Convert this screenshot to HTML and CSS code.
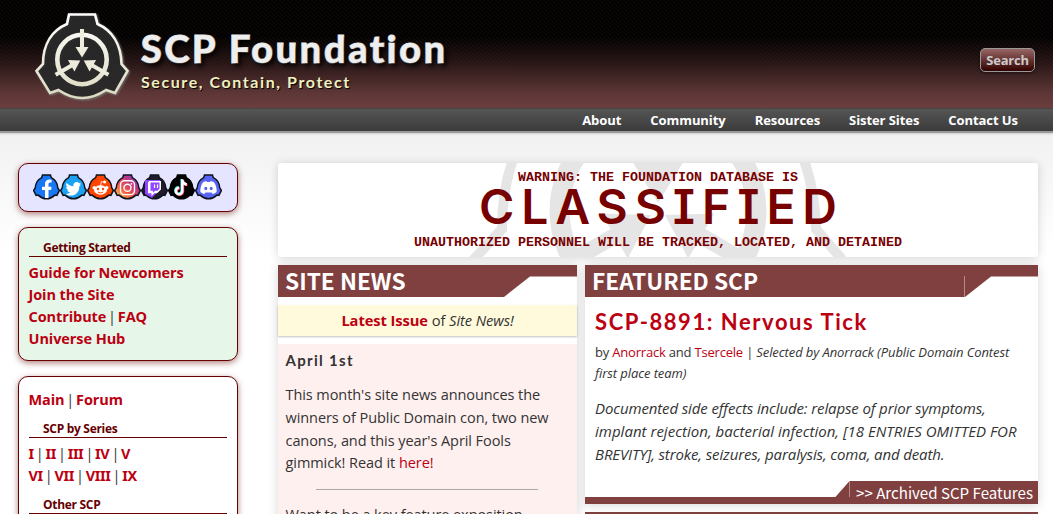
FILE: index.html
```html
<!DOCTYPE html>
<html lang="en">
<head>
<meta charset="utf-8">
<title>SCP Foundation</title>
<link rel="stylesheet" href="styles.css">
</head>
<body>
<svg class="defs" width="0" height="0">
  <defs>
    <linearGradient id="cream" x1="0" y1="13" x2="0" y2="100" gradientUnits="userSpaceOnUse"><stop offset="0" stop-color="#fff"/><stop offset="1" stop-color="#dcd9c0"/></linearGradient>
    <linearGradient id="insta" x1="0" y1="1" x2="1" y2="0"><stop offset="0" stop-color="#fd5"/><stop offset=".35" stop-color="#f56040"/><stop offset=".65" stop-color="#c13584"/><stop offset="1" stop-color="#5851db"/></linearGradient>
    <path id="shell" d="M69 14.500H95L97.500 24C111 30 121 43 121.500 64L127.500 71 115 93 106 90Q82 106 58.500 90L50 93 36.500 71 43 64C43 43 53 30 67 24Z"/>
    <g id="arrow"><path d="M80 29h4v18h4.500L82 57.500 75.500 47H80z"/></g>
    <g id="arrows"><use href="#arrow"/><use href="#arrow" transform="rotate(120 82 59.500)"/><use href="#arrow" transform="rotate(240 82 59.500)"/></g>
    <path id="badge" d="M9.500 1h8l.8 2.600C22 5.500 24.600 9 24.800 14l1.600 2.400-2.500 5-2-.3Q13.500 28.500 5.100 21.100l-2 .3-2.500-5L2.200 14C2.400 9 5 5.500 8.700 3.600z"/>
  </defs>
</svg>
<header class="header">
  <div class="brandbar">
    <svg class="logo" viewBox="30 8 104 96">
      <use href="#shell" fill="#181818" fill-opacity=".78" stroke="url(#cream)" stroke-width="2.600"/>
      <circle cx="82" cy="59.500" r="24.700" fill="none" stroke="url(#cream)" stroke-width="4.600"/>
      <use href="#arrows" fill="#edebdd"/>
    </svg>
    <div class="brand">
      <h1 class="title">SCP Foundation</h1>
      <div class="tagline">Secure, Contain, Protect</div>
    </div>
    <button class="search">Search</button>
  </div>
  <nav class="nav"><a>About</a><a>Community</a><a>Resources</a><a>Sister Sites</a><a>Contact Us</a></nav>
</header>
<div class="page">
  <aside class="side">
    <div class="box social">
      <svg class="ico" viewBox="0 0 27 27"><use href="#badge" fill="#1877f2" stroke="#10131c" stroke-width="1.500"/><path fill="#fff" d="M12 24v-8H9v-3.300h3v-2.500C12 7 13.800 5.500 16.300 5.500l2.300.2v2.900h-1.300c-1.400 0-1.800.8-1.800 1.700v2.400h3.100l-.5 3.300h-2.600v8z"/></svg>
      <svg class="ico" viewBox="0 0 27 27"><use href="#badge" fill="#1da1f2" stroke="#10131c" stroke-width="1.500"/><path fill="#fff" d="M20.800 8.800l-1.700.5a3.300 3.300 0 0 0-5.700 3C10.700 12.200 8.200 10.900 6.600 8.800c-.8 1.500-.5 3.400 1 4.500l-1.500-.4c0 1.500 1.100 2.900 2.700 3.300l-1.500.1c.4 1.300 1.700 2.200 3.100 2.300A6.800 6.800 0 0 1 5.500 20c6.800 4.100 14-.4 13.800-7.600l1.900-1.800-1.700.4z"/></svg>
      <svg class="ico" viewBox="0 0 27 27"><use href="#badge" fill="#ff4500" stroke="#10131c" stroke-width="1.500"/><g fill="#fff"><ellipse cx="13.500" cy="16" rx="6.500" ry="4.700"/><circle cx="7.300" cy="13.800" r="1.800"/><circle cx="19.700" cy="13.800" r="1.800"/><circle cx="17.700" cy="8" r="1.500"/></g><path d="M13.500 12l.9-4.400 3 .6" fill="none" stroke="#fff" stroke-width=".8"/><path d="M10.800 18.100q2.700 1.700 5.400 0" fill="none" stroke="#ff4500"/><circle cx="11" cy="15" r="1.200" fill="#ff4500"/><circle cx="16" cy="15" r="1.200" fill="#ff4500"/></svg>
      <svg class="ico" viewBox="0 0 27 27"><use href="#badge" fill="url(#insta)" stroke="#10131c" stroke-width="1.500"/><g fill="none" stroke="#fff" stroke-width="1.400"><rect x="6.500" y="6.800" width="14" height="13.800" rx="3.800"/><circle cx="13.500" cy="13.700" r="3.500"/></g><circle cx="17.500" cy="9.800" r=".9" fill="#fff"/></svg>
      <svg class="ico" viewBox="0 0 27 27"><use href="#badge" fill="#211c2c" stroke="#10131c" stroke-width="1.500"/><path fill="#9146ff" d="M4 6h15v9l-8 9-7-4z"/><path fill="#fff" d="M8 7h12v8.500l-4 3.800h-2.500L10.500 22v-2.700H7V9z"/><path fill="#9146ff" d="M9.500 8.500h9v6.200l-2 2H14l-2 2v-2H9.500z"/><path d="M13.500 10.500v3.500M16.500 10.500v3.500" stroke="#fff" stroke-width="1.200"/></svg>
      <svg class="ico" viewBox="0 0 27 27"><use href="#badge" fill="#000" stroke="#000" stroke-width="1.500"/><g fill="none" stroke-width="2.500"><path stroke="#25f4ee" d="M13.700 5v11.500a3.200 3.200 0 1 1-3.200-3.200M13.700 5.500q.7 4 4.500 4.500"/><path stroke="#fe2c55" d="M15 6v11.500a3.200 3.200 0 1 1-3.200-3.200M15 6.500q.7 4 4.500 4.500"/><path stroke="#fff" d="M14.300 5.500V17a3.200 3.200 0 1 1-3.200-3.200M14.300 6q.7 4 4.500 4.500"/></g></svg>
      <svg class="ico" viewBox="0 0 27 27"><use href="#badge" fill="#5865f2" stroke="#10131c" stroke-width="1.500"/><path fill="#fff" d="M8 8.200l3.300-1.200.6 1.100h3.200l.6-1.100L19 8.200c2 3 3 6.200 2.600 9.800-1.200 1-2.500 1.600-4 2l-1-1.600h-6.200l-1 1.600c-1.500-.4-2.800-1-4-2C5 14.400 6 11.200 8 8.200z"/><ellipse cx="10.800" cy="14.500" rx="1.500" ry="1.700" fill="#5865f2"/><ellipse cx="16.200" cy="14.500" rx="1.500" ry="1.700" fill="#5865f2"/></svg>
    </div>
    <div class="box green">
      <h2 class="sh">Getting Started</h2>
      <div class="links"><div><a>Guide for Newcomers</a></div><div><a>Join the Site</a></div><div class="piped"><a>Contribute</a> | <a>FAQ</a></div><div><a>Universe Hub</a></div></div>
    </div>
    <div class="box white">
      <div class="links piped"><a>Main</a> | <a>Forum</a></div>
      <h2 class="sh series">SCP by Series</h2>
      <div class="links roman"><div><a>I</a> | <a>II</a> | <a>III</a> | <a>IV</a> | <a>V</a></div><div><a>VI</a> | <a>VII</a> | <a>VIII</a> | <a>IX</a></div></div>
      <h2 class="sh other">Other SCP</h2>
    </div>
  </aside>
  <main class="main">
    <section class="banner">
      <svg class="mark" viewBox="278 163 760 94"><g transform="translate(658 211) scale(4) translate(-82 -59.500)"><use href="#shell" fill="none" stroke="#e5e5e5" stroke-width="2.500"/><circle cx="82" cy="59.500" r="24.600" fill="none" stroke="#e5e5e5" stroke-width="5"/><use href="#arrows" fill="#e5e5e5"/></g></svg>
      <div class="warn">WARNING: THE FOUNDATION DATABASE IS</div>
      <div class="classified">CLASSIFIED</div>
      <div class="warn low">UNAUTHORIZED PERSONNEL WILL BE TRACKED, LOCATED, AND DETAINED</div>
    </section>
    <div class="cols">
      <section class="news">
        <h2 class="bar">SITE NEWS<svg class="cut" viewBox="0 0 73 21"><path fill="#fff" d="M0 21L26 .5H73V21z"/></svg></h2>
        <div class="latest"><a>Latest Issue</a> of <i>Site News!</i></div>
        <div class="article">
          <h3 class="date">April 1st</h3>
          <p class="copy">This month's site news announces the<br>winners of Public Domain con, two new<br>canons, and this year's April Fools<br>gimmick! Read it <a>here!</a></p>
          <hr class="rule">
          <p class="copy">Want to be a key feature exposition</p>
        </div>
      </section>
      <div class="right">
        <section class="feature">
          <h2 class="bar">FEATURED SCP<svg class="cut" viewBox="0 0 73 21"><path fill="#fff" d="M0 21L26 .5H73V21z"/><path d="M-.5 0V21" stroke="#b78a8a"/></svg></h2>
          <h3 class="scp">SCP-8891: Nervous Tick</h3>
          <p class="by"><span>by <a>Anorrack</a> and <a>Tsercele</a> | </span><i>Selected by Anorrack (Public Domain Contest<br>first place team)</i></p>
          <p class="desc">Documented side effects include: relapse of prior symptoms,<br><span class="caps">implant rejection, bacterial infection, [18 ENTRIES OMITTED FOR</span><br>BREVITY], stroke, seizures, paralysis, coma, and death.</p>
          <div class="foot"><svg class="tab" viewBox="0 0 203 23"><path fill="#814040" d="M0 23V16.500L14.500 0H203V23z"/><path d="M14.500 0V16" stroke="#b78a8a"/></svg><span class="arch">&gt;&gt; Archived SCP Features</span></div>
        </section>
        <section class="next"></section>
      </div>
    </div>
  </main>
</div>
</body>
</html>
```
FILE: styles.css
```css
* { box-sizing: border-box; }
html { overflow: hidden; }
body { margin: 0; height: 514px; overflow: hidden; color: #333; background: #fff linear-gradient(#efefef 0, #f2f2f2 140px, #fff 250px); font-family: "Open Sans", "Noto Sans", sans-serif; }
h1, h2, h3, p { margin: 0; }
a { color: #b01; text-decoration: none; }
.defs { position: absolute; }

.header { height: 133px; border-bottom: 2px solid #9a9a9a; box-shadow: 0 1px 2px #ccc; }
.brandbar { height: 108px; display: flex; align-items: flex-start; padding: 8px 18px 0 30px; background: repeating-linear-gradient(45deg, transparent 0 1.500px, rgba(150, 90, 90, .07) 1.500px 2.830px), linear-gradient(#000 0, #000 34%, #251414 58%, #5b3535 86%, #6a3d3d 100%); }
.logo { width: 104px; height: 96px; flex: none; filter: drop-shadow(1px 1px 1px #777); }
.brand { margin-left: 7px; flex: 1; }
.title { margin-top: 17px; height: 47px; font: 900 38px/46px Lato, sans-serif; letter-spacing: 2.550px; color: #eee; -webkit-text-stroke: 1.200px #eee; paint-order: stroke fill; text-shadow: 3px 3px 5px #000; white-space: nowrap; }
.tagline { margin-top: -1px; font: 700 16px/22px Lato, sans-serif; letter-spacing: 1.580px; color: #f0f0c0; text-shadow: 1px 1px 1px #000; white-space: nowrap; }
.search { margin: 40px 0 0; width: 55px; height: 24px; padding: 0; border: 1px solid #999; border-radius: 5px; background: linear-gradient(#966, #300); color: #ccc; font: 700 13px/22px "Open Sans", sans-serif; letter-spacing: -.2px; box-shadow: 0 1px 3px rgba(0, 0, 0, .5); }
.nav { height: 23px; display: flex; justify-content: flex-end; gap: 29px; padding-right: 35px; background: linear-gradient(#555, #3b3b3b); border-top: 1px solid #444; }
.nav a { color: #fff; font-weight: 700; font-size: 13px; line-height: 22px; letter-spacing: -.07px; white-space: nowrap; }

.page { display: flex; height: 381px; overflow: hidden; padding: 30px 15px 0 18px; gap: 40px; }
.side { width: 220px; display: flex; flex-direction: column; gap: 15px; }
.box { flex: none; border: 1px solid #600; border-radius: 10px; box-shadow: 0 2px 6px rgba(102, 0, 0, .5); background: #fff; }
.social { height: 49px; display: flex; justify-content: center; align-items: center; padding-right: 2px; background: #e5e5ff; }
.ico { width: 27px; height: 27px; }
.green { height: 134px; padding: 12px 10px 0; background: #e6f6e9; }
.white { height: 180px; padding: 12px 10px 0; }
.sh { height: 17px; padding-left: 14px; border-bottom: 1px solid #600; color: #600; font: 700 12px/16px "Open Sans", sans-serif; letter-spacing: -.3px; white-space: nowrap; }
.links { margin-left: -.5px; font-size: 14.500px; line-height: 22px; white-space: nowrap; letter-spacing: -.08px; }
.links a { font-weight: 700; }
.green .links { padding-top: 5px; }
.piped { word-spacing: -1.900px; }
.series { margin-top: 10px; }
.roman { padding-top: 5px; letter-spacing: -.4px; word-spacing: -1.300px; }
.roman div { height: 22px; line-height: 21px; }
.roman a { font-family: "Noto Sans", sans-serif; line-height: 1; }
.other { margin-top: 10px; }

.main { width: 760px; }
.banner { position: relative; height: 94px; overflow: hidden; border-radius: 3px; background: #fff; text-align: center; color: #700; }
.banner, .news, .feature { box-shadow: 0 1px 10px rgba(0, 0, 0, .17); }
.mark { position: absolute; inset: 0; width: 760px; height: 94px; }
.warn { position: relative; padding-top: 6px; font: 700 13.333px/17px "Liberation Mono", monospace; white-space: nowrap; }
.classified { position: relative; height: 43px; font: 600 48px/42px Inter, sans-serif; letter-spacing: 6.900px; text-indent: 6.900px; font-feature-settings: "cv08" 1; }
.low { padding-top: 5px; }
.cols { display: flex; gap: 8px; padding-top: 8px; }
.news { width: 299px; height: 260px; background: #fff; }
.bar { height: 32px; display: flex; justify-content: space-between; align-items: flex-end; background: #814040; padding-left: 7px; color: #fff; font: 700 22.700px/32px "Noto Sans CJK SC", sans-serif; white-space: nowrap; }
.cut { width: 73px; height: 21px; flex: none; overflow: visible; }
.latest { margin-top: 8px; height: 31px; background: #fffadc; box-shadow: 0 1px 2px rgba(0, 0, 0, .25); text-align: center; font-size: 14.700px; line-height: 31px; letter-spacing: -.08px; }
.latest a { font-weight: 700; }
.article { margin-top: 8px; height: 190px; background: #fff0f0; padding: 6px 8px 0 7.500px; }
.date { font: 700 15px/20px Lato, sans-serif; letter-spacing: 1.300px; }
.copy { margin-top: 14px; font-size: 14.500px; line-height: 22.800px; letter-spacing: -.07px; white-space: nowrap; }
.rule { width: 222px; height: 1px; border: 0; margin: 14px auto 0; background: #aaa; }
.right { width: 453px; }
.feature { height: 239px; display: flex; flex-direction: column; background: #fff; }
.scp { padding: 11px 10px 1px; color: #b01; font: 700 22px/27px Lato, sans-serif; letter-spacing: 1.560px; white-space: nowrap; }
.by { padding: 6px 10px 0; font-size: 13px; line-height: 21px; letter-spacing: -.2px; white-space: nowrap; }
.by i { letter-spacing: -.08px; }
.desc { padding: 13px 10px 0; font-size: 15px; line-height: 23px; font-style: italic; letter-spacing: -.12px; white-space: nowrap; }
.caps { letter-spacing: .02px; }
.foot { position: relative; margin-top: auto; height: 23px; display: flex; justify-content: flex-end; padding-right: 5px; background: linear-gradient(transparent 16px, #814040 16px); color: #fff; font: 400 15.100px/23px "Noto Sans CJK SC", sans-serif; }
.tab { position: absolute; right: 0; top: 0; width: 203px; height: 23px; }
.arch { position: relative; white-space: nowrap; }
.next { margin-top: 8px; height: 20px; background: #814040; }
```
